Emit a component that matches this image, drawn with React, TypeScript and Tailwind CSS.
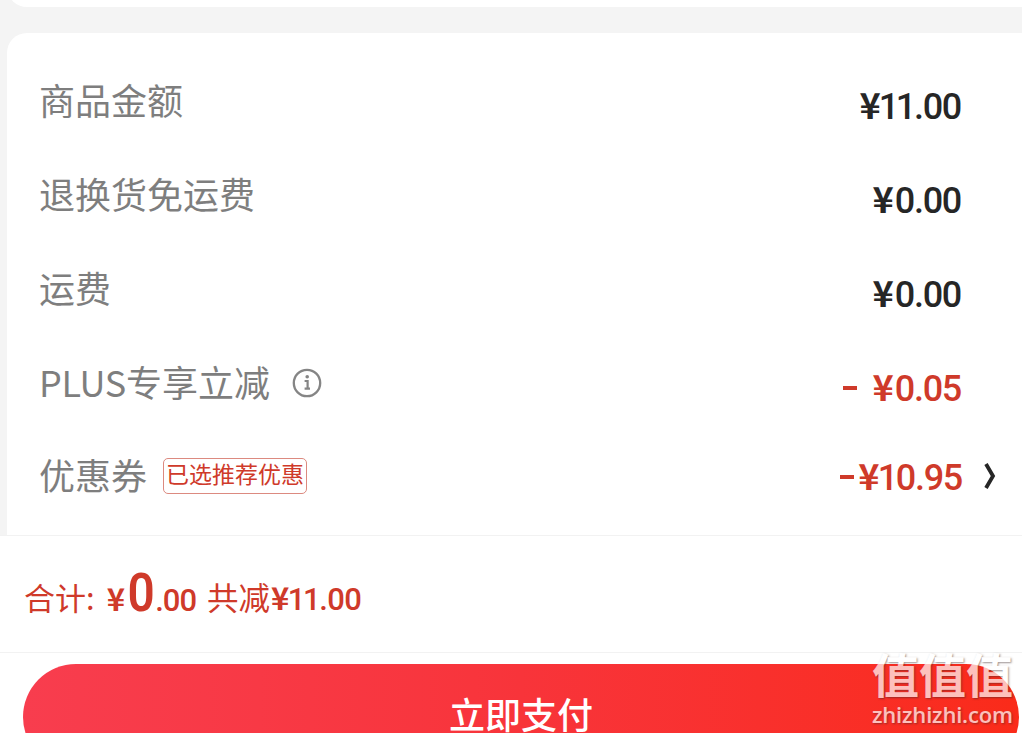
interface PriceRow {
  label: string
  value: string
}

const rows: PriceRow[] = [
  { label: '商品金额', value: '11.00' },
  { label: '退换货免运费', value: '0.00' },
  { label: '运费', value: '0.00' },
]

const labelClass = 'text-[36px] leading-[88px] text-[#7e7e7e]'
const valueClass = "text-[36px] leading-[84px] font-medium tracking-[-1.3px] font-['Roboto',sans-serif]"

// 数字 1 的字距比其他数字更紧
function Price({ value }: { value: string }) {
  return (
    <>
      <span
        className={`font-['Noto_Sans_CJK_SC',sans-serif] leading-none font-bold tracking-normal ${
          value.startsWith('1') ? 'mr-[-0.02em]' : 'mr-[0.03em]'
        }`}
      >
        ¥
      </span>
      {value.split('').map((char, index) => (
        <span key={index} className={char === '1' ? 'mr-[-0.03em] ml-[-0.03em]' : ''}>
          {char}
        </span>
      ))}
    </>
  )
}

function InfoIcon() {
  return (
    <svg className="mt-[3px] ml-[22px] h-[30px] w-[30px]" viewBox="0 0 30 30" fill="none" stroke="#858585">
      <circle cx="15" cy="15" r="13.2" strokeWidth="2.3" />
      <path d="M12.6 13h3v7.6M12.6 20.6h5.4" strokeWidth="2.2" />
      <circle cx="15.2" cy="8.8" r="1.8" fill="#858585" stroke="none" />
    </svg>
  )
}

function ChevronIcon() {
  return (
    <svg className="ml-[22px] h-[28px] w-[12px]" viewBox="0 0 12 28" fill="none" stroke="#262626" strokeWidth="3.8">
      <path d="M2 2 9 14 2 26" />
    </svg>
  )
}

function Watermark() {
  return (
    <div className="absolute top-[645px] left-[872px] text-white opacity-70 [text-shadow:1px_1px_2px_rgba(60,40,40,0.7)]">
      <div className="h-[58px] text-[47px] leading-[56px] font-bold">值值值</div>
      <div className="font-['Open_Sans',sans-serif] text-[22px] leading-[22px] font-semibold tracking-[-0.2px]">
        zhizhizhi.com
      </div>
    </div>
  )
}

export default function App() {
  return (
    <div className="relative flex h-[733px] w-[1022px] flex-col overflow-hidden bg-[#f4f4f4] font-['Noto_Sans_CJK_SC',sans-serif]">
      {/* 上一张卡片的底边 */}
      <div className="-mt-[33px] ml-[7px] h-[40px] shrink-0 rounded-bl-[20px] bg-white" />

      {/* 金额明细 */}
      <section className="mt-[26px] ml-[7px] h-[502px] shrink-0 rounded-tl-[20px] bg-white pt-[22px] pl-[32px]">
        {rows.map((row) => (
          <div key={row.label} className="flex h-[94px] justify-between pr-[61px]">
            <span className={labelClass}>{row.label}</span>
            <span className={`${valueClass} pt-[10px] text-[#262626]`}>
              <Price value={row.value} />
            </span>
          </div>
        ))}

        <div className="flex h-[94px] justify-between pr-[61px]">
          <div className="flex h-[88px] items-center">
            <span className={labelClass}>
              <span className="tracking-[-0.3px]">PLUS</span>专享立减
            </span>
            <InfoIcon />
          </div>
          <span className={`${valueClass} pt-[10px] text-[#cf3a2a]`}>
            <span className="mr-[15px] inline-block h-[4px] w-[14px] bg-current align-[11px]" />
            <Price value="0.05" />
          </span>
        </div>

        <div className="flex h-[92px] justify-between pr-[26px]">
          <div className="flex items-center">
            <span className={`${labelClass} -mt-[6px]`}>优惠券</span>
            <span className="-mt-[2px] ml-[16px] flex h-[36px] w-[144px] items-center justify-center rounded-[5px] border border-[#dc8a80] pb-[5px] text-[23px] leading-none text-[#cf3a2a]">
              已选推荐优惠
            </span>
          </div>
          <div className="flex h-[90px] items-center">
            <span className={`${valueClass} pt-[4px] text-[#cf3a2a]`}>
              <span className="mr-[4px] inline-block h-[4px] w-[14px] bg-current align-[11px]" />
              <Price value="10.95" />
            </span>
            <ChevronIcon />
          </div>
        </div>
      </section>

      {/* 合计 */}
      <div className="h-[118px] shrink-0 border-y border-[#f2f2f2] bg-white pl-[24px] text-[#cf3a2a]">
        <div className="flex items-baseline leading-[112px]">
          <span className="text-[31px]">合计:</span>
          <span className="relative top-[1px] ml-[12px] flex items-baseline font-['Roboto',sans-serif] font-medium">
            <span className="font-['Noto_Sans_CJK_SC',sans-serif] text-[31px] font-bold">¥</span>
            <span className="ml-px inline-block origin-center scale-x-90 text-[53px] font-semibold">0</span>
            <span className="-ml-px text-[31px] tracking-[-1px]">.00</span>
          </span>
          <span className="ml-[11px] text-[31.5px]">共减</span>
          <span className="ml-px font-['Roboto',sans-serif] text-[31px] font-medium tracking-[-0.6px]">
            <Price value="11.00" />
          </span>
        </div>
      </div>

      {/* 支付按钮 */}
      <div className="flex-1 bg-white pt-[11px] pr-[3px] pl-[23px]">
        <button
          type="button"
          className="flex h-[106px] w-full justify-center rounded-full bg-linear-to-r from-[#f83d4e] via-[#f8343a] to-[#fa2b19] pt-[22px] text-[36px] leading-[54px] font-medium text-white"
        >
          立即支付
        </button>
      </div>

      <Watermark />
    </div>
  )
}
